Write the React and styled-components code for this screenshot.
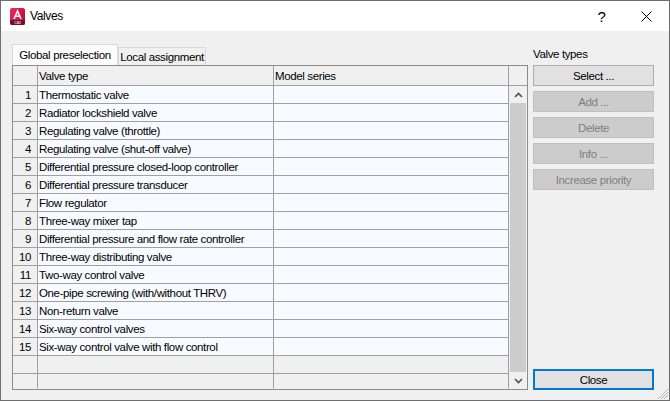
import React from "react";
import styled, { createGlobalStyle } from "styled-components";

const Global = createGlobalStyle`
  html, body {
    margin: 0;
    padding: 0;
    background: #f0f0f0;
  }
  * { box-sizing: border-box; }
`;

const Dialog = styled.div`
  width: 670px;
  height: 401px;
  display: flex;
  flex-direction: column;
  position: relative;
  border: 1px solid #6e6e6e;
  background: #f0f0f0;
  color: #000;
  font-family: "Liberation Sans", Roboto, sans-serif;
  font-size: 11.5px;
  letter-spacing: -0.37px;
  overflow: hidden;
`;

const TitleBar = styled.div`
  height: 30px;
  flex: none;
  display: flex;
  align-items: center;
  background: #fff;
  padding-left: 9px;
  font-size: 12px;
`;

const TitleIcon = styled.svg`
  margin-right: 5px;
`;

const TitleText = styled.span`
  flex: 1;
`;

const TitleButton = styled.div`
  width: 45px;
  height: 30px;
  display: flex;
  align-items: center;
  justify-content: center;
  font-size: 15px;
`;

const Body = styled.div`
  flex: 1;
  display: flex;
  padding: 13px 15px 10px 11px;
  gap: 5px;
`;

const LeftPane = styled.div`
  width: 516px;
  display: flex;
  flex-direction: column;
`;

const TabRow = styled.div`
  height: 21px;
  display: flex;
  align-items: flex-end;
`;

const Tab = styled.div`
  display: flex;
  align-items: center;
  justify-content: center;
  white-space: nowrap;
  width: ${(p) => p.$width}px;
  height: ${(p) => (p.$active ? 21 : 18)}px;
  border: 1px solid #d9d9d9;
  border-bottom: none;
  background: ${(p) => (p.$active ? "#fcfcfc" : "#f0f0f0")};
`;

const GridFrame = styled.div`
  flex: 1;
  display: flex;
  flex-direction: column;
  border: 1px solid #8c8c8c;
  background: #f0f0f0;
`;

const Row = styled.div`
  display: grid;
  grid-template-columns: 25px 236px 235px;
  height: ${(p) => p.$height || 18}px;
  flex: none;
`;

const HeaderRow = styled.div`
  display: grid;
  grid-template-columns: 25px 236px 235px 1fr;
  height: 20px;
  flex: none;
  border-bottom: 1px solid #a0a0a0;
`;

const Cell = styled.div`
  display: flex;
  align-items: center;
  padding-left: 1px;
  white-space: nowrap;
  border-right: 1px solid #a0a0a0;
  border-bottom: 1px solid ${(p) => (p.$last ? "transparent" : "#a0a0a0")};
  background: ${(p) => (p.$filled ? "#f7fbff" : "#f0f0f0")};
`;

const HeaderCell = styled.div`
  display: flex;
  align-items: center;
  padding-left: 1px;
  border-right: 1px solid #a0a0a0;

  &:last-child {
    border-right: none;
  }
`;

const RowNumber = styled(Cell)`
  justify-content: flex-end;
  padding: 0 6px 0 0;
`;

const GridBody = styled.div`
  flex: 1;
  display: flex;
`;

const Rows = styled.div`
  width: 496px;
  display: flex;
  flex-direction: column;
`;

const ScrollBar = styled.div`
  flex: 1;
  display: flex;
  flex-direction: column;
  padding: 0 1px;
`;

const ScrollArrow = styled.div`
  height: 17px;
  flex: none;
  display: flex;
  align-items: center;
  justify-content: center;
`;

const ScrollThumb = styled.div`
  flex: 1;
  background: #cdcdcd;
`;

const RightPane = styled.div`
  flex: 1;
  display: flex;
  flex-direction: column;
`;

const PaneLabel = styled.div`
  height: 21px;
  display: flex;
  align-items: center;
  padding-bottom: 2px;
`;

const ButtonStack = styled.div`
  flex: 1;
  display: flex;
  flex-direction: column;
  gap: 5px;
`;

const Button = styled.button`
  height: 21px;
  padding: 0;
  font: inherit;
  letter-spacing: inherit;
  border: ${(p) => (p.$primary ? "2px solid #0078d7" : "1px solid #adadad")};
  background: ${(p) => (p.disabled ? "#cccccc" : "#e1e1e1")};
  color: ${(p) => (p.disabled ? "#7f7f7f" : "#000")};
  border-color: ${(p) => (p.$primary ? "#0078d7" : p.disabled ? "#bfbfbf" : "#adadad")};
  margin-top: ${(p) => (p.$primary ? "auto" : 0)};
`;

const Grip = styled.svg`
  position: absolute;
  right: 0;
  bottom: 0;
`;

const valves = [
  "Thermostatic valve",
  "Radiator lockshield valve",
  "Regulating valve (throttle)",
  "Regulating valve (shut-off valve)",
  "Differential pressure closed-loop controller",
  "Differential pressure transducer",
  "Flow regulator",
  "Three-way mixer tap",
  "Differential pressure and flow rate controller",
  "Three-way distributing valve",
  "Two-way control valve",
  "One-pipe screwing (with/without THRV)",
  "Non-return valve",
  "Six-way control valves",
  "Six-way control valve with flow control",
];

const AppIcon = () => (
  <TitleIcon width="15" height="17" viewBox="0 0 15 17">
    <defs>
      <linearGradient id="appIconFill" x1="0" y1="0" x2="1" y2="0.6">
        <stop offset="0" stopColor="#ee2a5c" />
        <stop offset="1" stopColor="#c40f38" />
      </linearGradient>
    </defs>
    <rect x="0" y="0" width="15" height="17" rx="2" fill="url(#appIconFill)" />
    <path d="M0 12 H15 V15 a2 2 0 0 1 -2 2 H2 a2 2 0 0 1 -2 -2 Z" fill="#6e1029" />
    <path d="M4 11 L7.5 3 L11 11 M5.4 8.3 H9.6" stroke="#fff" strokeWidth="1.6" fill="none" />
    <text x="7.5" y="15.8" fontSize="3.6" fontWeight="700" textAnchor="middle" fill="#e9b9c5">CAD</text>
  </TitleIcon>
);

const Chevron = ({ down }) => (
  <svg width="9" height="6" viewBox="0 0 9 6">
    <path d={down ? "M1 1 L4.5 4.5 L8 1" : "M1 5 L4.5 1.5 L8 5"} stroke="#505050" strokeWidth="1.6" fill="none" />
  </svg>
);

export default function App() {
  return (
    <>
      <Global />
      <Dialog>
        <TitleBar>
          <AppIcon />
          <TitleText>Valves</TitleText>
          <TitleButton>?</TitleButton>
          <TitleButton>
            <svg width="11" height="11" viewBox="0 0 11 11">
              <path d="M0.5 0.5 L10.5 10.5 M10.5 0.5 L0.5 10.5" stroke="#000" strokeWidth="1" />
            </svg>
          </TitleButton>
        </TitleBar>
        <Body>
          <LeftPane>
            <TabRow>
              <Tab $active $width={106}>Global preselection</Tab>
              <Tab $width={88}>Local assignment</Tab>
            </TabRow>
            <GridFrame>
              <HeaderRow>
                <HeaderCell />
                <HeaderCell>Valve type</HeaderCell>
                <HeaderCell>Model series</HeaderCell>
                <HeaderCell />
              </HeaderRow>
              <GridBody>
                <Rows>
                  {valves.map((name, i) => (
                    <Row key={name}>
                      <RowNumber>{i + 1}</RowNumber>
                      <Cell $filled>{name}</Cell>
                      <Cell $filled />
                    </Row>
                  ))}
                  <Row>
                    <Cell />
                    <Cell />
                    <Cell />
                  </Row>
                  <Row $height={15}>
                    <Cell $last />
                    <Cell $last />
                    <Cell $last />
                  </Row>
                </Rows>
                <ScrollBar>
                  <ScrollArrow><Chevron /></ScrollArrow>
                  <ScrollThumb />
                  <ScrollArrow><Chevron down /></ScrollArrow>
                </ScrollBar>
              </GridBody>
            </GridFrame>
          </LeftPane>
          <RightPane>
            <PaneLabel>Valve types</PaneLabel>
            <ButtonStack>
              <Button>Select ...</Button>
              <Button disabled>Add ...</Button>
              <Button disabled>Delete</Button>
              <Button disabled>Info ...</Button>
              <Button disabled>Increase priority</Button>
              <Button $primary>Close</Button>
            </ButtonStack>
          </RightPane>
        </Body>
        <Grip width="12" height="12" viewBox="0 0 12 12">
          <path d="M11 1 L1 11 M11 4 L4 11 M11 7 L7 11" stroke="#b5b5b5" strokeWidth="1" />
        </Grip>
      </Dialog>
    </>
  );
}
